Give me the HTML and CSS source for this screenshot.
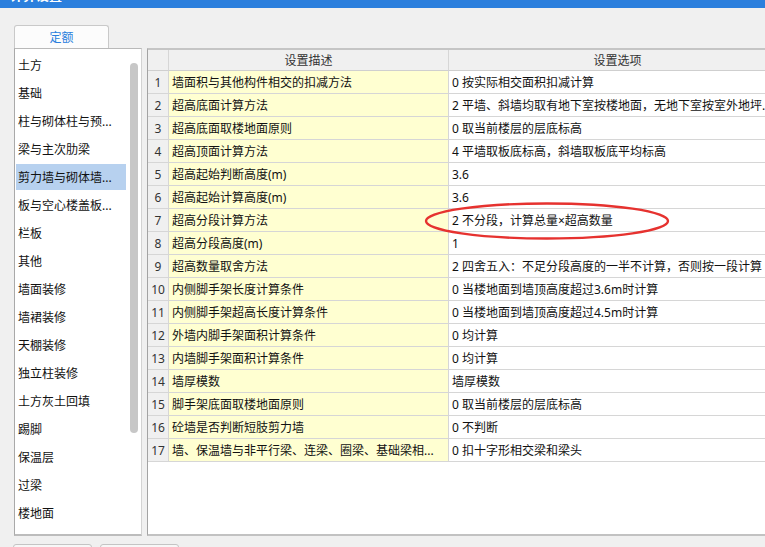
FILE: index.html
```html
<!DOCTYPE html>
<html lang="zh">
<head>
<meta charset="utf-8">
<title>计算设置</title>
<link rel="stylesheet" href="styles.css">
</head>
<body>
<div class="titlebar"><span class="title">计算设置</span></div>
<div class="main">
  <div class="side">
    <div class="tabbar"><div class="tab">定额</div></div>
    <div class="listpanel">
      <ul class="list">
        <li>土方</li>
        <li>基础</li>
        <li>柱与砌体柱与预...</li>
        <li>梁与主次肋梁</li>
        <li class="sel">剪力墙与砌体墙...</li>
        <li>板与空心楼盖板...</li>
        <li>栏板</li>
        <li>其他</li>
        <li>墙面装修</li>
        <li>墙裙装修</li>
        <li>天棚装修</li>
        <li>独立柱装修</li>
        <li>土方灰土回填</li>
        <li>踢脚</li>
        <li>保温层</li>
        <li>过梁</li>
        <li>楼地面</li>
        <li>砌体加筋钢筋</li>
      </ul>
      <div class="scroll"><div class="thumb"></div></div>
    </div>
  </div>
  <div class="tablepanel">
    <div class="grid">
      <div class="hd"></div><div class="hd">设置描述</div><div class="hd">设置选项</div>
      <div class="num">1</div><div class="desc">墙面积与其他构件相交的扣减方法</div><div class="opt">0 按实际相交面积扣减计算</div>
      <div class="num">2</div><div class="desc">超高底面计算方法</div><div class="opt">2 平墙、斜墙均取有地下室按楼地面，无地下室按室外地坪...</div>
      <div class="num">3</div><div class="desc">超高底面取楼地面原则</div><div class="opt">0 取当前楼层的层底标高</div>
      <div class="num">4</div><div class="desc">超高顶面计算方法</div><div class="opt">4 平墙取板底标高，斜墙取板底平均标高</div>
      <div class="num">5</div><div class="desc">超高起始判断高度(m)</div><div class="opt">3.6</div>
      <div class="num">6</div><div class="desc">超高起始计算高度(m)</div><div class="opt">3.6</div>
      <div class="num">7</div><div class="desc">超高分段计算方法</div><div class="opt">2 不分段，计算总量×超高数量</div>
      <div class="num">8</div><div class="desc">超高分段高度(m)</div><div class="opt">1</div>
      <div class="num">9</div><div class="desc">超高数量取舍方法</div><div class="opt">2 四舍五入：不足分段高度的一半不计算，否则按一段计算</div>
      <div class="num">10</div><div class="desc">内侧脚手架长度计算条件</div><div class="opt">0 当楼地面到墙顶高度超过3.6m时计算</div>
      <div class="num">11</div><div class="desc">内侧脚手架超高长度计算条件</div><div class="opt">0 当楼地面到墙顶高度超过4.5m时计算</div>
      <div class="num">12</div><div class="desc">外墙内脚手架面积计算条件</div><div class="opt">0 均计算</div>
      <div class="num">13</div><div class="desc">内墙脚手架面积计算条件</div><div class="opt">0 均计算</div>
      <div class="num">14</div><div class="desc">墙厚模数</div><div class="opt">墙厚模数</div>
      <div class="num">15</div><div class="desc">脚手架底面取楼地面原则</div><div class="opt">0 取当前楼层的层底标高</div>
      <div class="num">16</div><div class="desc">砼墙是否判断短肢剪力墙</div><div class="opt">0 不判断</div>
      <div class="num">17</div><div class="desc">墙、保温墙与非平行梁、连梁、圈梁、基础梁相...</div><div class="opt">0 扣十字形相交梁和梁头</div>
    </div>
    <svg class="mark" width="260" height="44" viewBox="0 0 260 44"><ellipse cx="129" cy="21" rx="121" ry="17.5" fill="none" stroke="#e6322f" stroke-width="2.4"/></svg>
  </div>
</div>
<div class="bottomtabs"><div class="btab"></div><div class="btab"></div></div>
</body>
</html>
```

FILE: styles.css
```css
html, body {
  margin: 0;
  padding: 0;
}
body {
  width: 765px;
  height: 547px;
  overflow: hidden;
  background: #f0f0f0;
  font-family: "Noto Sans", "Noto Sans CJK SC", sans-serif;
  font-size: 12px;
  color: #111;
}
.titlebar {
  height: 8px;
  background: #2b7fdd;
  overflow: hidden;
  padding-left: 10px;
}
.title {
  display: block;
  color: #fff;
  font-size: 13px;
  line-height: 13px;
  margin-top: -11px;
  font-weight: bold;
}
.main {
  display: flex;
  gap: 5px;
  padding-left: 14px;
  margin-top: 17px;
}
.side {
  width: 128px;
  flex: none;
}
.tabbar {
  height: 23px;
}
.tab {
  box-sizing: border-box;
  width: 95px;
  height: 23px;
  border: 1px solid #c9c9c9;
  border-bottom: none;
  border-radius: 3px 3px 0 0;
  background: #fcfcfc;
  color: #2b7fdd;
  text-align: center;
  line-height: 24px;
  font-size: 12px;
}
.listpanel {
  box-sizing: border-box;
  height: 488px;
  background: #fff;
  border-left: 1px solid #a9a9a9;
  border-top: 1px solid #b9b9b9;
  border-right: 1px solid #d3d3d3;
  border-bottom: 2px solid #bcbcbc;
  display: flex;
  overflow: hidden;
}
.list {
  list-style: none;
  margin: 0;
  padding: 3px 0 0 1px;
  width: 110px;
  flex: none;
}
.list li {
  height: 26px;
  line-height: 28px;
  margin-bottom: 2px;
  padding-left: 2px;
  white-space: nowrap;
  overflow: hidden;
  color: #111;
}
.list li.sel {
  background: #b7d1ef;
}
.scroll {
  flex: 1;
  padding: 14px 0 0 4px;
}
.thumb {
  width: 8px;
  height: 370px;
  border-radius: 4px;
  background: #c7c7c7;
}
.tablepanel {
  position: relative;
  box-sizing: border-box;
  flex: none;
  width: 640px;
  height: 488px;
  margin-top: 23px;
  background: #fff;
  border-left: 1px solid #a3a3a3;
  border-top: 2px solid #c5c5c5;
  border-bottom: 2px solid #c2c2c2;
  overflow: hidden;
}
.grid {
  display: grid;
  grid-template-columns: 21px 280px 1fr;
}
.grid > div {
  box-sizing: border-box;
  height: 23px;
  line-height: 24px;
  border-right: 1px solid #d6d6d6;
  border-bottom: 1px solid #d6d6d6;
  white-space: nowrap;
  overflow: hidden;
}
.grid > .hd {
  height: 21px;
  line-height: 21px;
  background: #f0f0f0;
  color: #333;
  text-align: center;
  border-bottom-color: #cfcfcf;
}
.num {
  background: #f0f0f0;
  color: #333;
  text-align: center;
}
.desc {
  background: #ffffd1;
  padding-left: 3px;
}
.opt {
  background: #fff;
  padding-left: 3px;
}
.mark {
  position: absolute;
  left: 270px;
  top: 150px;
}
.bottomtabs {
  display: flex;
  gap: 8px;
  padding-left: 13px;
  margin-top: 8px;
}
.btab {
  box-sizing: border-box;
  width: 79px;
  height: 10px;
  border: 1px solid #c4c4c4;
  border-radius: 3px 3px 0 0;
  background: #f7f7f7;
}
```
